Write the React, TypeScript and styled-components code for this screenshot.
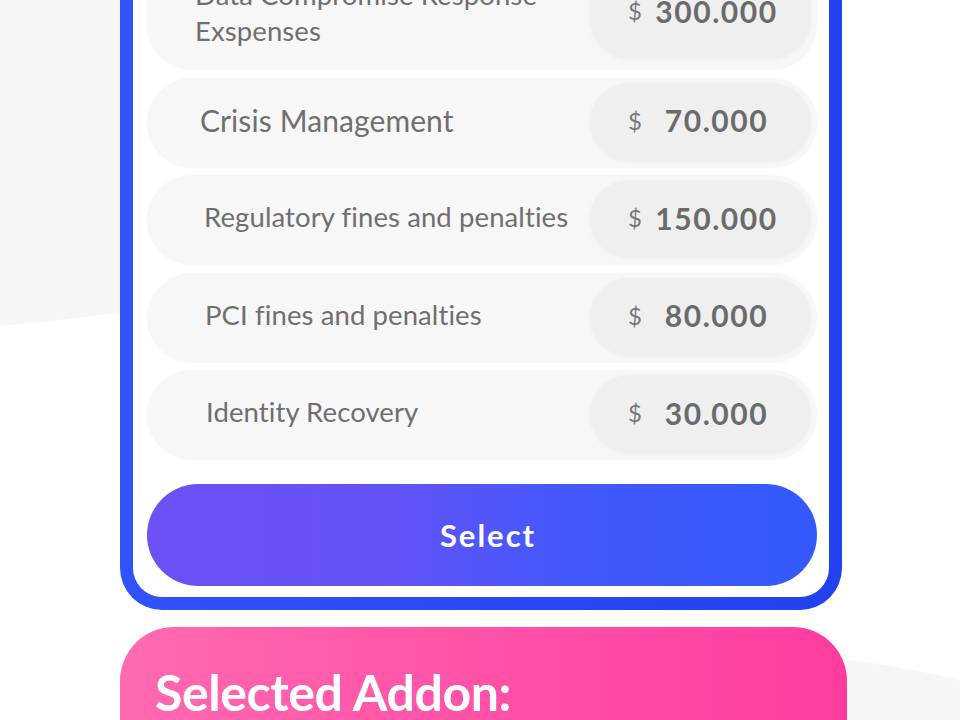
import React from "react";
import styled, { createGlobalStyle } from "styled-components";

const GlobalStyle = createGlobalStyle`
  html, body {
    margin: 0;
    padding: 0;
    background: #ffffff;
    overflow: hidden;
  }
  body {
    font-family: "Lato", "Open Sans", sans-serif;
  }
`;

const Page = styled.div`
  width: 960px;
  height: 720px;
  overflow: hidden;
  display: flex;
  flex-direction: column;
  align-items: flex-start;
  padding-left: 120px;
  box-sizing: border-box;
  background:
    radial-gradient(900px 335px at -200px 0px, #f6f6f6 0, #f6f6f6 99.6%, rgba(246, 246, 246, 0) 100%),
    radial-gradient(650px 350px at 700px 1000px, #f6f6f6 0, #f6f6f6 99.6%, rgba(246, 246, 246, 0) 100%),
    #ffffff;
`;

const CardFrame = styled.section`
  margin-top: -60px;
  width: 722px;
  box-sizing: border-box;
  padding: 13px;
  border-radius: 42px;
  background: linear-gradient(90deg, #3153fb 0%, #2748f4 60%, #2142ee 100%);
`;

const CardInner = styled.div`
  background: #ffffff;
  border-radius: 29px;
  padding: 7px 12px 11px 14px;
  display: flex;
  flex-direction: column;
`;

const RowList = styled.div`
  display: flex;
  flex-direction: column;
  gap: 7.5px;
`;

const Row = styled.div<{ $tall?: boolean }>`
  height: ${(p) => (p.$tall ? 110 : 90)}px;
  box-sizing: border-box;
  display: flex;
  align-items: stretch;
  background: #f7f7f7;
  border-radius: 45px;
  padding: 5px 6px ${(p) => (p.$tall ? 11 : 7)}px 0;
  box-shadow: 0 0 0 1px rgba(0, 0, 0, 0.006);
`;

const Label = styled.div<{ $indent: number; $size: number; $tall?: boolean }>`
  flex: 1;
  display: flex;
  align-items: center;
  padding-left: ${(p) => p.$indent}px;
  padding-bottom: 4px;
  margin-bottom: ${(p) => (p.$tall ? -6 : 0)}px;
  color: #6f6f6f;
  font-size: ${(p) => p.$size}px;
  line-height: 36px;
  font-weight: 400;
  letter-spacing: 0.1px;
`;

const Pill = styled.div`
  width: 221px;
  box-sizing: border-box;
  display: flex;
  align-items: center;
  padding-left: 38px;
  padding-right: 22px;
  padding-bottom: 3px;
  background: #efefef;
  border-radius: 40px;
  box-shadow: 0 1px 5px rgba(0, 0, 0, 0.035);
  color: #6b6b6b;
`;

const Currency = styled.span`
  font-size: 24px;
  font-weight: 400;
  color: #777777;
  width: 16px;
`;

const Amount = styled.span`
  flex: 1;
  text-align: center;
  font-size: 30px;
  font-weight: 700;
  letter-spacing: 1.6px;
`;

const SelectButton = styled.button`
  margin-top: 24px;
  height: 102px;
  width: 100%;
  border: none;
  border-radius: 51px;
  padding: 0 0 0 12px;
  background: linear-gradient(90deg, #6d51f5 0%, #6453f6 35%, #4458fb 62%, #3359fd 100%);
  color: #ffffff;
  font-family: "Lato", "Open Sans", sans-serif;
  font-size: 31px;
  font-weight: 700;
  letter-spacing: 2px;
  cursor: pointer;
`;

const AddonCard = styled.section`
  margin-top: 17px;
  width: 727px;
  height: 200px;
  flex-shrink: 0;
  box-sizing: border-box;
  padding: 35px 35px 0 35px;
  border-radius: 54px;
  background: linear-gradient(90deg, #ff6ab0 0%, #ff54a8 45%, #ff3c9e 100%);
`;

const AddonTitle = styled.h2`
  margin: 0;
  color: #ffffff;
  font-size: 50px;
  line-height: 60px;
  font-weight: 700;
  letter-spacing: -0.4px;
`;

type Item = { label: React.ReactNode; amount: string; indent: number; size: number; tall?: boolean };

const items: Item[] = [
  {
    label: (
      <span>
        Data Compromise Response
        <br />
        Exspenses
      </span>
    ),
    amount: "300.000",
    indent: 48,
    size: 27.5,
    tall: true,
  },
  { label: "Crisis Management", amount: "70.000", indent: 53, size: 30 },
  { label: "Regulatory fines and penalties", amount: "150.000", indent: 57, size: 27.5 },
  { label: "PCI fines and penalties", amount: "80.000", indent: 58, size: 27.5 },
  { label: "Identity Recovery", amount: "30.000", indent: 59, size: 27.5 },
];

export default function App() {
  return (
    <>
      <GlobalStyle />
      <Page>
        <CardFrame>
          <CardInner>
            <RowList>
              {items.map((it, i) => (
                <Row key={i} $tall={it.tall}>
                  <Label $indent={it.indent} $size={it.size} $tall={it.tall}>
                    {it.label}
                  </Label>
                  <Pill>
                    <Currency>$</Currency>
                    <Amount>{it.amount}</Amount>
                  </Pill>
                </Row>
              ))}
            </RowList>
            <SelectButton>Select</SelectButton>
          </CardInner>
        </CardFrame>
        <AddonCard>
          <AddonTitle>Selected Addon:</AddonTitle>
        </AddonCard>
      </Page>
    </>
  );
}
